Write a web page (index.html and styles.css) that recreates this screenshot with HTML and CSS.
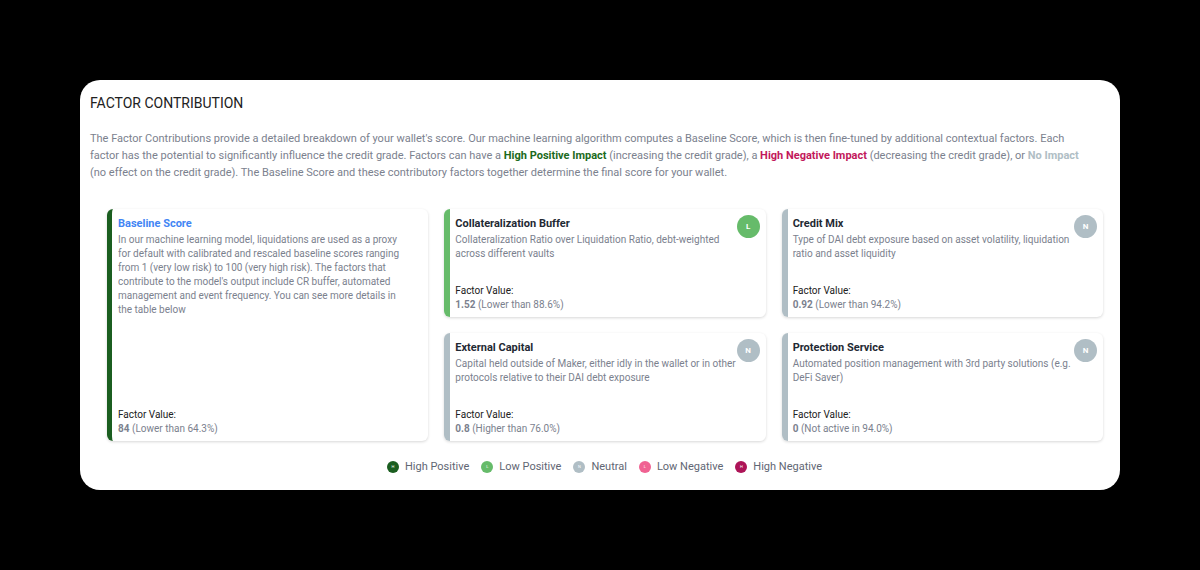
FILE: index.html
```html
<!DOCTYPE html>
<html lang="en">
<head>
<meta charset="utf-8">
<title>Factor Contribution</title>
<link rel="stylesheet" href="styles.css">
</head>
<body>
<main class="panel">
  <h1 class="panel-title">FACTOR CONTRIBUTION</h1>
  <p class="intro">The Factor Contributions provide a detailed breakdown of your wallet's score. Our machine learning algorithm computes a Baseline Score, which is then fine-tuned by additional contextual factors. Each factor has the potential to significantly influence the credit grade. Factors can have a <strong class="text-high-positive">High Positive Impact</strong> (increasing the credit grade), a <strong class="text-high-negative">High Negative Impact</strong> (decreasing the credit grade), or <strong class="text-neutral">No Impact</strong> (no effect on the credit grade). The Baseline Score and these contributory factors together determine the final score for your wallet.</p>

  <section class="cards">
    <article class="card card-baseline high-positive">
      <div class="card-text">
        <h2 class="card-title">Baseline Score</h2>
        <p class="card-desc">In our machine learning model, liquidations are used as a proxy for default with calibrated and rescaled baseline scores ranging from 1 (very low risk) to 100 (very high risk). The factors that contribute to the model's output include CR buffer, automated management and event frequency. You can see more details in the table below</p>
      </div>
      <p class="card-value"><span class="value-label">Factor Value:</span><b>84</b> (Lower than 64.3%)</p>
    </article>

    <article class="card low-positive">
      <div class="card-text">
        <h2 class="card-title">Collateralization Buffer</h2>
        <p class="card-desc">Collateralization Ratio over Liquidation Ratio, debt-weighted across different vaults</p>
      </div>
      <span class="badge">L</span>
      <p class="card-value"><span class="value-label">Factor Value:</span><b>1.52</b> (Lower than 88.6%)</p>
    </article>

    <article class="card neutral">
      <div class="card-text">
        <h2 class="card-title">Credit Mix</h2>
        <p class="card-desc">Type of DAI debt exposure based on asset volatility, liquidation ratio and asset liquidity</p>
      </div>
      <span class="badge">N</span>
      <p class="card-value"><span class="value-label">Factor Value:</span><b>0.92</b> (Lower than 94.2%)</p>
    </article>

    <article class="card neutral">
      <div class="card-text">
        <h2 class="card-title">External Capital</h2>
        <p class="card-desc">Capital held outside of Maker, either idly in the wallet or in other protocols relative to their DAI debt exposure</p>
      </div>
      <span class="badge">N</span>
      <p class="card-value"><span class="value-label">Factor Value:</span><b>0.8</b> (Higher than 76.0%)</p>
    </article>

    <article class="card neutral">
      <div class="card-text">
        <h2 class="card-title">Protection Service</h2>
        <p class="card-desc">Automated position management with 3rd party solutions (e.g. DeFi Saver)</p>
      </div>
      <span class="badge">N</span>
      <p class="card-value"><span class="value-label">Factor Value:</span><b>0</b> (Not active in 94.0%)</p>
    </article>
  </section>

  <ul class="legend">
    <li class="legend-item high-positive"><span class="dot">H</span>High Positive</li>
    <li class="legend-item low-positive"><span class="dot">L</span>Low Positive</li>
    <li class="legend-item neutral"><span class="dot">N</span>Neutral</li>
    <li class="legend-item low-negative"><span class="dot">L</span>Low Negative</li>
    <li class="legend-item high-negative"><span class="dot">H</span>High Negative</li>
  </ul>
</main>
</body>
</html>
```
FILE: styles.css
```css
* {
  box-sizing: border-box;
  margin: 0;
  padding: 0;
}

body {
  padding: 80px;
  background: #000;
  color: #7b818e;
  font-family: Roboto, "Liberation Sans", sans-serif;
}

.high-positive { --tone: #1b5e20; }
.low-positive { --tone: #66bb6a; }
.neutral { --tone: #b0bec5; }
.low-negative { --tone: #f06292; }
.high-negative { --tone: #ad1457; }

.panel {
  padding: 14px 10px;
  border-radius: 20px;
  background: #fff;
}

.panel-title {
  color: #212121;
  font-size: 14px;
  font-weight: 400;
  line-height: 18px;
}

.intro {
  margin-top: 18px;
  padding-right: 20px;
  font-size: 11px;
  line-height: 17px;
}

.text-high-positive { color: #1b6a20; }
.text-high-negative { color: #c2185b; }
.text-neutral { color: #b0bec5; }

.cards {
  display: grid;
  grid-template-columns: repeat(3, 1fr);
  grid-auto-rows: 1fr;
  gap: 16px;
  padding: 28px 7px 0 17px;
}

.card {
  display: grid;
  grid-template-columns: 1fr 23px;
  grid-template-rows: 1fr auto;
  min-height: 108px;
  padding: 6px 6px 5px 5px;
  border-left: 6px solid var(--tone);
  border-radius: 6px;
  box-shadow: 0 1px 3px rgba(0, 0, 0, 0.16);
}

.card-baseline {
  grid-row: span 2;
  grid-template-columns: 1fr 16px;
  border-left-width: 5px;
  padding-left: 6px;
}

.card-text { padding-top: 1px; }

.card-title {
  color: #1f2933;
  font-size: 11px;
  font-weight: 700;
  line-height: 16px;
}

.card-baseline .card-title { color: #4285f4; }

.card-desc,
.card-value {
  font-size: 10px;
  line-height: 14px;
}

.card-desc { margin-top: 1px; }

.card-value { grid-column: 1 / -1; }

.value-label {
  display: block;
  color: #212121;
}

.badge,
.dot {
  display: flex;
  align-items: center;
  justify-content: center;
  border-radius: 50%;
  background: var(--tone);
  color: #fff;
}

.badge {
  width: 23px;
  height: 23px;
  font-size: 8px;
  font-weight: 700;
}

.legend {
  display: flex;
  justify-content: center;
  gap: 12px;
  margin-top: 17px;
  padding-left: 9px;
  list-style: none;
}

.legend-item {
  display: flex;
  align-items: center;
  gap: 6px;
  font-size: 11px;
  line-height: 18px;
  color: #5f6673;
}

.dot {
  width: 12px;
  height: 12px;
  font-size: 4px;
}
```
